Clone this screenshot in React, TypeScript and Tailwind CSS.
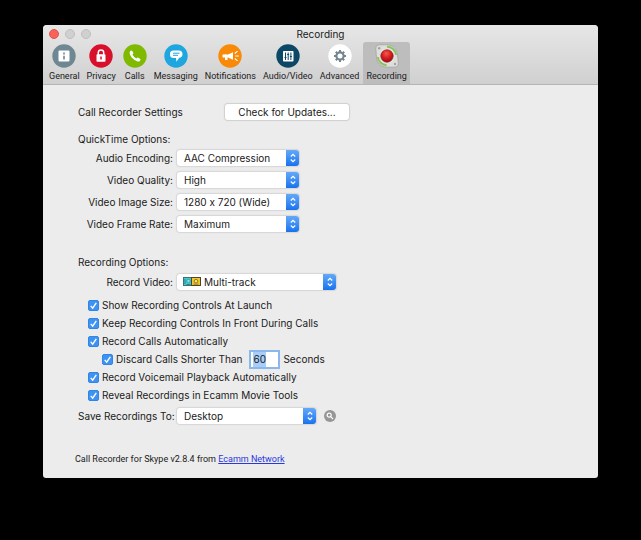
import { useEffect, useRef, useState } from "react";
import type { ReactNode } from "react";

interface Tab {
  name: string;
  color: string;
  glyph: ReactNode;
}

const tabs: Tab[] = [
  {
    name: "General",
    color: "#6f8792",
    glyph: (
      <>
        <rect x="6.5" y="6.5" width="11" height="11" rx="1" fill="#fff" />
        <path d="M12 8.5v2M12 11.8v3.7" stroke="#6f8792" strokeWidth="1.6" />
      </>
    ),
  },
  {
    name: "Privacy",
    color: "#d9102b",
    glyph: (
      <>
        <path
          d="M9.3 11V8.6a2.7 2.7 0 0 1 5.4 0V11"
          fill="none"
          stroke="#fff"
          strokeWidth="1.5"
        />
        <rect x="7.5" y="10.3" width="9" height="7.4" rx="0.8" fill="#fff" />
        <path d="M12 12.4v3" stroke="#d9102b" strokeWidth="1.5" />
      </>
    ),
  },
  {
    name: "Calls",
    color: "#7fb900",
    glyph: (
      <path
        d="M7.1 7.2c.8-1 1.6-1 2.1-.2l1.1 1.8c.3.6 0 1-.8 1.7.8 1.8 2.1 3.1 4 4 .7-.8 1.1-1.1 1.7-.8l1.8 1.1c.8.5.8 1.3-.2 2.1-1.5 1.2-4.4.3-7-2.3S5.9 8.7 7.1 7.2z"
        fill="#fff"
      />
    ),
  },
  {
    name: "Messaging",
    color: "#1ea6df",
    glyph: (
      <>
        <path
          d="M9.5 6.5H15a3.5 3.5 0 0 1 3.5 3.7c0 2-1.3 3.5-3.3 3.5l-2.7 4-.6-3.7H9.5A3.6 3.6 0 0 1 6 10.2a3.6 3.6 0 0 1 3.5-3.7z"
          fill="#fff"
        />
        <path d="M9 9.2h6.5M9 11.3h5" stroke="#1ea6df" strokeWidth="1" />
      </>
    ),
  },
  {
    name: "Notifications",
    color: "#f98a08",
    glyph: (
      <>
        <path
          d="M4.5 10.5H7V9.8l1 .7h2l5-2.3v7.600l-5-2.300H9.500V16H7v-2.500H4.500z"
          fill="#fff"
        />
        <path
          d="M16.8 9.5l2.7-2.3M17.2 12h3.6M16.8 14.5l2.7 2.3"
          stroke="#fff"
          strokeWidth="1.1"
        />
      </>
    ),
  },
  {
    name: "Audio/Video",
    color: "#0c4866",
    glyph: (
      <>
        <rect x="7" y="7" width="10.5" height="10.5" rx="0.8" fill="#fff" />
        <path
          d="M9.5 8.5V16M12.2 8.5V16M14.9 8.5V16M8.5 13.5h2M11.2 10.5h2M13.9 12.5h2"
          stroke="#0c4866"
          strokeWidth="1"
        />
      </>
    ),
  },
  {
    name: "Advanced",
    color: "#ffffff",
    glyph: (
      <g stroke="#74858e" fill="none">
        <circle cx="12" cy="12" r="3.6" strokeWidth="2.2" />
        <path
          d="M12 6v2M12 16v2M6 12h2M16 12h2M7.8 7.8l1.4 1.4M14.8 14.8l1.4 1.4M16.2 7.8l-1.4 1.4M9.2 14.8l-1.4 1.4"
          strokeWidth="2"
        />
      </g>
    ),
  },
];

function RecorderIcon() {
  return (
    <svg viewBox="0 0 24 24" className="size-6" aria-hidden="true">
      <defs>
        <radialGradient id="recordKnob" cx="0.45" cy="0.3" r="0.7">
          <stop offset="0" stopColor="#f45a50" />
          <stop offset="0.5" stopColor="#dc1f22" />
          <stop offset="1" stopColor="#960d12" />
        </radialGradient>
      </defs>
      <path
        d="M4 .8h8C18 .8 22 5 22.6 11l.7 8.5a3.5 3.5 0 0 1-3.7 3.7H12C6 23.2 2 19 1.4 13L.8 4.5A3.4 3.4 0 0 1 4 .8z"
        fill="#dcdfda"
        stroke="#a3a5a2"
        strokeWidth="0.8"
      />
      <path
        d="M12 2.8a9.200 9.200 0 0 1 9.200 8M2.800 13a9.200 9.200 0 0 0 8.800 8.200"
        fill="none"
        stroke="#8ac45c"
        strokeWidth="1.9"
      />
      <circle cx="4.2" cy="4.3" r="1.2" fill="#a1a3a1" />
      <circle cx="20" cy="20" r="1.2" fill="#a1a3a1" />
      <circle cx="12" cy="12" r="7.3" fill="#f1efed" />
      <circle cx="12" cy="12" r="6.2" fill="url(#recordKnob)" stroke="#8c2020" strokeWidth="0.8" />
    </svg>
  );
}

interface PopupProps {
  id: string;
  label: string;
  value: string;
  width: string;
  icon?: ReactNode;
  children?: ReactNode;
}

function Popup({ id, label, value, width, icon, children }: PopupProps) {
  return (
    <div className="flex h-[18px] items-center gap-1">
      <label htmlFor={id} className="w-[95px] shrink-0 text-right whitespace-nowrap">
        {label}
      </label>
      <div className={`relative h-4 ${width}`}>
        <select
          id={id}
          className={`block h-4 w-full appearance-none rounded-[3px] bg-white pr-4 leading-4 shadow-[0_0_1px_1px_#d6d6d6] outline-none [font-variant-ligatures:none] [font-feature-settings:'calt'_0] ${
            icon ? "pl-[27px]" : "pl-[7px]"
          }`}
        >
          <option>{value}</option>
        </select>
        {icon && (
          <span className="pointer-events-none absolute top-[3px] left-[6px]">{icon}</span>
        )}
        <span className="pointer-events-none absolute top-0 right-0 flex h-4 w-[13px] items-center justify-center rounded-r-[3px] bg-linear-to-b from-[#62a9f8] to-[#1672ee]">
          <svg viewBox="0 0 8 12" className="h-3 w-2" fill="none" stroke="#fff" strokeWidth="1.2">
            <path d="M1.8 4.5L4 2.3l2.2 2.2M1.8 7.5L4 9.7l2.2-2.2" />
          </svg>
        </span>
      </div>
      {children}
    </div>
  );
}

function Check({ label, indent }: { label: string; indent?: boolean }) {
  const [on, setOn] = useState(true);
  return (
    <label className={`flex h-[18px] items-center gap-[3px] ${indent ? "pl-6" : "pl-[10px]"}`}>
      <span className="relative size-[11px]">
        <input
          type="checkbox"
          checked={on}
          onChange={() => setOn(!on)}
          className="block size-[11px] appearance-none rounded-[2px] border border-[#b5b5b5] bg-white checked:border-[#3085e8] checked:bg-[#3f92f0]"
        />
        {on && (
          <svg
            viewBox="0 0 11 11"
            className="pointer-events-none absolute inset-0 size-[11px]"
            fill="none"
            stroke="#fff"
            strokeWidth="1.4"
          >
            <path d="M2.7 5.9l2 2.2L8.3 2.8" />
          </svg>
        )}
      </span>
      {label}
    </label>
  );
}

function TracksIcon() {
  return (
    <svg viewBox="0 0 18 10" className="h-[10px] w-[18px]" aria-hidden="true">
      <rect x="0.5" y="0.5" width="9" height="8" fill="#45c9d4" stroke="#3b7476" />
      <path d="M2 2v5M3.5 7.5h4" stroke="#1d7580" strokeWidth="0.8" />
      <circle cx="5.5" cy="4" r="1.7" fill="#8ce7e2" stroke="#267e80" strokeWidth="0.6" />
      <rect x="8.5" y="0.5" width="9" height="8" fill="#f0c632" stroke="#4d4724" />
      <circle cx="13" cy="4.2" r="1.8" fill="#fbe56b" stroke="#7c611c" strokeWidth="0.8" />
      <path d="M10.5 7.2h5" stroke="#8b6c18" strokeWidth="0.8" />
    </svg>
  );
}

export default function App() {
  const secondsRef = useRef<HTMLInputElement>(null);

  useEffect(() => {
    secondsRef.current?.focus();
    secondsRef.current?.select();
  }, []);

  return (
    <div className="min-h-screen bg-black px-[43px] py-[25px] font-['Inter','Liberation_Sans',sans-serif] text-[10px] leading-[18px] text-[#202020]">
      <main className="overflow-hidden rounded-t-[4px] rounded-b-[3px] bg-[#ececec]">
        <header className="border-b border-[#b5b5b5] bg-linear-to-b from-[#e7e7e7] to-[#d0d0d0]">
          <div className="grid h-[17px] grid-cols-[1fr_auto_1fr] items-center">
            <div className="flex gap-[6px] pl-[6px]">
              <button aria-label="Close" className="size-[10px] rounded-full border border-[#df5650] bg-[#f9615a]" />
              <button aria-label="Minimize" className="size-[10px] rounded-full border border-[#bdbdbd] bg-[#d0d0d0]" />
              <button aria-label="Zoom" className="size-[10px] rounded-full border border-[#bdbdbd] bg-[#d0d0d0]" />
            </div>
            <h1>Recording</h1>
          </div>
          <nav className="flex gap-px pl-[3px] font-['Roboto','Liberation_Sans',sans-serif] text-[9px] leading-[14px]">
            {tabs.map((tab) => (
              <button
                key={tab.name}
                className="flex h-[42px] min-w-[30px] flex-col items-center gap-[1px] px-[3px] pt-[2px]"
              >
                <svg viewBox="0 0 24 24" className="size-6" aria-hidden="true">
                  <circle cx="12" cy="12" r="11.7" fill={tab.color} />
                  {tab.glyph}
                </svg>
                {tab.name}
              </button>
            ))}
            <button className="flex h-[42px] flex-col items-center gap-[1px] rounded-t-[3px] bg-[#bdbdbd] px-[3px] pt-[2px]">
              <RecorderIcon />
              Recording
            </button>
          </nav>
        </header>

        <form className="pt-[18px] pb-[10px] pl-[35px]" onSubmit={(e) => e.preventDefault()}>
          <div className="flex h-[18px] items-center">
            <h2 className="w-[147px]">Call Recorder Settings</h2>
            <button
              type="button"
              className="h-4 w-[124px] rounded-[3px] bg-white leading-4 shadow-[0_0_1px_1px_#d0d0d0]"
            >
              Check for Updates...
            </button>
          </div>

          <h2 className="mt-[9px]">QuickTime Options:</h2>
          <div className="mt-[1px] flex flex-col gap-1">
            <Popup id="audio" label="Audio Encoding:" value="AAC Compression" width="w-[122px]" />
            <Popup id="quality" label="Video Quality:" value="High" width="w-[122px]" />
            <Popup id="size" label="Video Image Size:" value="1280 x 720 (Wide)" width="w-[122px]" />
            <Popup id="rate" label="Video Frame Rate:" value="Maximum" width="w-[122px]" />
          </div>

          <h2 className="mt-5">Recording Options:</h2>
          <div className="mt-[2px] mb-[5px]">
            <Popup
              id="video"
              label="Record Video:"
              value="Multi-track"
              width="w-[159px]"
              icon={<TracksIcon />}
            />
          </div>

          <Check label="Show Recording Controls At Launch" />
          <Check label="Keep Recording Controls In Front During Calls" />
          <Check label="Record Calls Automatically" />
          <div className="flex h-[18px] items-center">
            <Check label="Discard Calls Shorter Than" indent />
            <input
              ref={secondsRef}
              aria-label="Seconds"
              defaultValue="60"
              className="mr-[5px] ml-[9px] h-[15px] w-[27px] bg-white pl-[2px] leading-[15px] shadow-[0_0_0_2px_#8bb8ec] outline-none selection:bg-[#a8cdf8] selection:text-[#202020]"
            />
            <span>Seconds</span>
          </div>
          <Check label="Record Voicemail Playback Automatically" />
          <Check label="Reveal Recordings in Ecamm Movie Tools" />

          <div className="mt-[3px]">
            <Popup id="save" label="Save Recordings To:" value="Desktop" width="w-[139px]">
              <button
                type="button"
                aria-label="Show in Finder"
                className="ml-1 flex size-3 items-center justify-center rounded-full bg-[#969696]"
              >
                <svg viewBox="0 0 12 12" className="size-3" fill="none" stroke="#fff" strokeWidth="1.2">
                  <circle cx="5.2" cy="5.2" r="2" />
                  <path d="M6.7 6.7l2.3 2.3" />
                </svg>
              </button>
            </Popup>
          </div>

          <p className="-ml-[3px] mt-[25px] font-['Roboto','Liberation_Sans',sans-serif] text-[9px]">
            Call Recorder for Skype v2.8.4 from{" "}
            <a href="#" className="text-[#2a39de] underline">
              Ecamm Network
            </a>
          </p>
        </form>
      </main>
    </div>
  );
}
